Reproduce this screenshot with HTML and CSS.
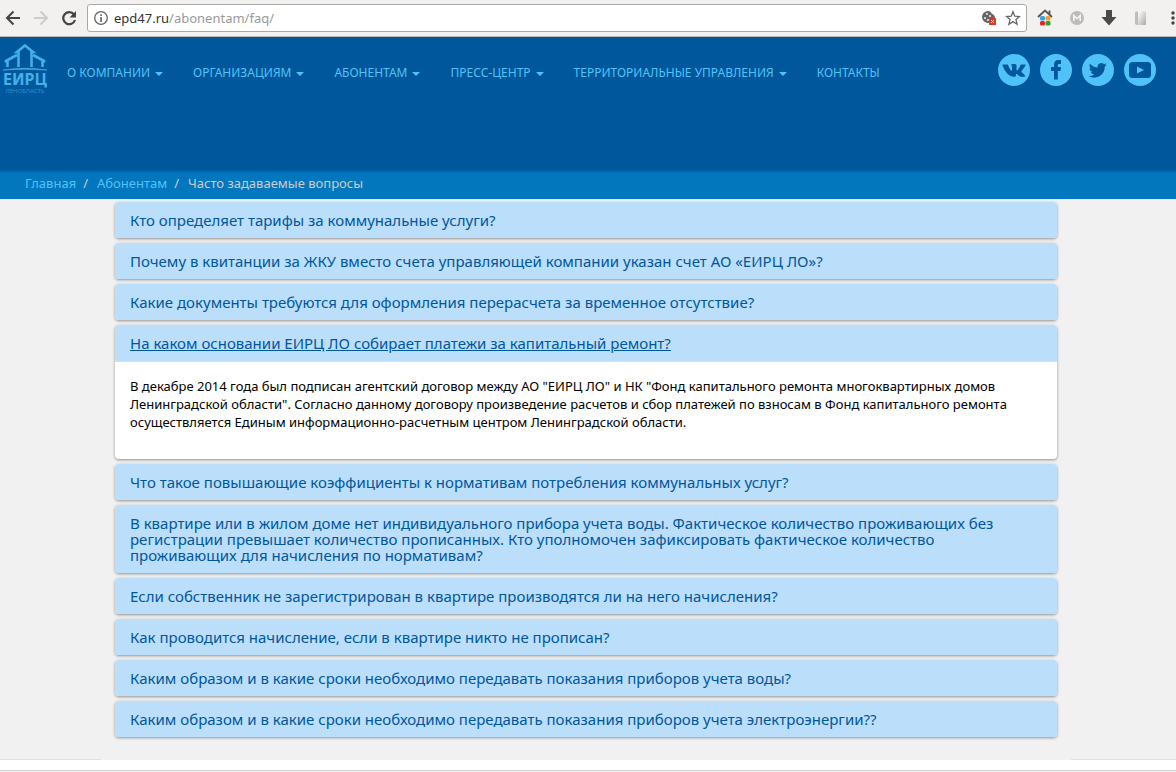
FILE: index.html
```html
<!DOCTYPE html>
<html lang="ru">
<head>
<meta charset="utf-8">
<title>Часто задаваемые вопросы</title>
<link rel="stylesheet" href="styles.css">
</head>
<body>
<div class="toolbar">
  <button class="tool" aria-label="Назад"><svg width="16" height="16" viewBox="0 0 16 16" fill="none" stroke="#444" stroke-width="2"><path d="M15 8H2M8.500 1.500L2 8l6.500 6.500"/></svg></button>
  <button class="tool" aria-label="Вперёд" disabled><svg width="16" height="16" viewBox="0 0 16 16" fill="none" stroke="#ccc" stroke-width="2"><path d="M1 8h13M7.500 1.500L14 8l-6.500 6.500"/></svg></button>
  <button class="tool" aria-label="Обновить"><svg width="16" height="16" viewBox="0 0 16 16"><path d="M13 4.500A6 6 0 1 0 14 10" fill="none" stroke="#444" stroke-width="2.200"/><path d="M15 1v6.500H8.500z" fill="#444"/></svg></button>
  <div class="address">
    <svg width="16" height="16" viewBox="0 0 16 16"><circle cx="8" cy="8" r="6.300" fill="none" stroke="#666" stroke-width="1.300"/><path d="M7.200 4.200h1.700v1.700H7.200zM7.200 7h1.700v5H7.200z" fill="#666"/></svg>
    <a class="url" href="#">epd47.ru<span class="path">/abonentam/faq/</span></a>
    <button class="tool" aria-label="Файлы cookie"><svg width="16" height="16" viewBox="0 0 16 16"><path d="M7 1a6 6 0 1 0 0 12h1V8h6c0-3-2-4-3-4-1-2-2-3-4-3z" fill="#666"/><g fill="#f4f4f4"><circle cx="6" cy="4" r="1"/><circle cx="4" cy="8" r="1"/><circle cx="7" cy="10" r="1"/><circle cx="9" cy="6" r="1"/></g><path d="M8 8h7v7H8z" fill="#d93a2e"/><path d="M10 10l3 3m0-3l-3 3" stroke="#fff"/></svg></button>
    <button class="tool" aria-label="Добавить в закладки"><svg width="16" height="16" viewBox="0 0 16 16"><path d="M8 1.800l1.800 4.400 4.700.3-3.600 3 1.200 4.700L8 11.600l-4.100 2.600 1.200-4.700-3.600-3 4.700-.3z" fill="none" stroke="#666" stroke-width="1.300"/></svg></button>
  </div>
  <div class="extensions">
    <button class="tool" aria-label="Домашняя страница"><svg width="16" height="18" viewBox="0 0 16 18"><path d="M1 8L8 1.500 15 8M12.500 1.500v4" fill="none" stroke="#555" stroke-width="1.800"/><rect x="3" y="7" width="5" height="4.500" rx="1.500" fill="#35a3ee"/><rect x="8.500" y="7" width="5" height="4.500" rx="1.500" fill="#f9a11b"/><rect x="3" y="12" width="5" height="4.500" rx="1.500" fill="#e52420"/><rect x="8.500" y="12" width="5" height="4.500" rx="1.500" fill="#22a339"/></svg></button>
    <button class="tool" aria-label="Расширение M"><svg width="16" height="16" viewBox="0 0 16 16"><circle cx="8" cy="8" r="7" fill="#bbb"/><path d="M4.800 11V5.500L8 8.700l3.200-3.200V11" fill="none" stroke="#f2f2f2" stroke-width="1.600"/></svg></button>
    <button class="tool" aria-label="Загрузки"><svg width="16" height="16" viewBox="0 0 16 16"><path d="M5 0h6v7h4.500L8 15.500.5 7H5z" fill="#4a4a4a"/></svg></button>
    <button class="tool" aria-label="Страница"><svg width="16" height="16" viewBox="0 0 16 16"><defs><linearGradient id="page-fill" x1="0" y1="0" x2="1" y2="1"><stop offset="0" stop-color="#fff"/><stop offset="1" stop-color="#aaa"/></linearGradient></defs><path d="M2 2l4-1v14H4q-2 0-2-2z" fill="#bdbdbd"/><path d="M5 1h6q2 0 2 2v11q0 1-1 1H5z" fill="url(#page-fill)"/></svg></button>
    <button class="tool" aria-label="Меню"><svg width="16" height="16" viewBox="0 0 16 16" fill="#444"><circle cx="8" cy="3" r="1.700"/><circle cx="8" cy="8" r="1.700"/><circle cx="8" cy="13" r="1.700"/></svg></button>
  </div>
</div>

<header class="header">
  <a class="logo" href="#" aria-label="ЕИРЦ Ленобласть">
    <svg width="48" height="54" viewBox="0 0 48 54"><g fill="none" stroke="#42b0e8" stroke-width="2.600"><path d="M15.500 24V9h-1.500L22 2.500 30 9h-1.500v15"/><path d="M14 12L2 18.500h2.500V24"/><path d="M30 12l12 6.500h-2.500V24"/></g><path d="M0 27Q22 23.500 44 27 22 25.500 0 27z" fill="#42b0e8" stroke="#42b0e8" stroke-width=".6"/><text class="logo-name" x="22" y="42" text-anchor="middle">ЕИРЦ</text><text class="logo-region" x="22" y="50" text-anchor="middle">ЛЕНОБЛАСТЬ</text></svg>
  </a>
  <nav class="menu">
    <a class="drop" href="#">О КОМПАНИИ</a>
    <a class="drop" href="#">ОРГАНИЗАЦИЯМ</a>
    <a class="drop" href="#">АБОНЕНТАМ</a>
    <a class="drop" href="#">ПРЕСС-ЦЕНТР</a>
    <a class="drop" href="#">ТЕРРИТОРИАЛЬНЫЕ УПРАВЛЕНИЯ</a>
    <a href="#">КОНТАКТЫ</a>
  </nav>
  <div class="social">
    <a href="#" aria-label="ВКонтакте"><svg width="32" height="32" viewBox="0 0 32 32"><path d="M5 10.500h4.200c.7 0 .8.500 1 1 .8 2 2 4.200 3 5 .6.400.9 0 .9-.7v-3c0-1.200-.6-1.400-1.200-1.700.4-.8 1.400-1 2.600-1 2 0 3 .1 3 1.500v4.200c0 .8.500 1 1.100.4 1.100-1.200 2.100-3 2.700-4.600.3-.7.500-1 1.300-1H27c.6 0 .6.500.3 1.100-.8 1.700-2.400 3.600-3.500 5-.5.600-.5 1 0 1.500 1 .9 2.400 2.300 3.200 3.400.5.600 0 1.200-.7 1.200h-3.500c-1.700 0-2.900-2.800-4.200-2.800-.6 0-.8.400-.8 1.200 0 1-.3 1.600-1.300 1.600-5.600 0-9.300-4.200-11.900-11.200-.2-.6-.2-1.100.4-1.100z" fill="#01579b"/></svg></a>
    <a href="#" aria-label="Facebook"><svg width="32" height="32" viewBox="0 0 32 32"><path d="M14 25.500V17h-3v-4h3v-2.500C14 7.800 15.700 6 18.300 6H21v4h-2c-.8 0-1.200.4-1.200 1.200V13H21l-.5 4h-2.700v8.500z" fill="#01579b"/></svg></a>
    <a href="#" aria-label="Twitter"><svg width="32" height="32" viewBox="0 0 32 32"><path d="M24.800 10.700a7 7 0 0 1-2.100.6 3.700 3.700 0 0 0 1.600-2 7 7 0 0 1-2.300.9 3.700 3.700 0 0 0-6.300 3.400 10.400 10.400 0 0 1-7.600-3.900 3.700 3.700 0 0 0 1.100 4.900 3.600 3.600 0 0 1-1.700-.5c0 1.800 1.200 3.300 3 3.700a3.700 3.700 0 0 1-1.700.1 3.700 3.700 0 0 0 3.400 2.500A7.400 7.400 0 0 1 6.800 22c6.800 4.200 16 0 16-9.400a7.500 7.500 0 0 0 2-1.900z" fill="#01579b"/></svg></a>
    <a href="#" aria-label="YouTube"><svg width="32" height="32" viewBox="0 0 32 32"><rect x="5" y="8" width="22" height="16" rx="3.500" fill="#01579b"/><path d="M13 12.500l7 3.500-7 3.500z" fill="#4fc3f7"/></svg></a>
  </div>
</header>

<nav class="crumbs" aria-label="Навигация">
  <a href="#">Главная</a><span class="sep">/</span><a href="#">Абонентам</a><span class="sep">/</span><span>Часто задаваемые вопросы</span>
</nav>

<main class="faq">
  <section class="panel"><h2><a href="#">Кто определяет тарифы за коммунальные услуги?</a></h2></section>
  <section class="panel"><h2><a href="#">Почему в квитанции за ЖКУ вместо счета управляющей компании указан счет АО «ЕИРЦ ЛО»?</a></h2></section>
  <section class="panel"><h2><a href="#">Какие документы требуются для оформления перерасчета за временное отсутствие?</a></h2></section>
  <section class="panel open"><h2><a href="#">На каком основании ЕИРЦ ЛО собирает платежи за капитальный ремонт?</a></h2>
    <p class="answer">В декабре 2014 года был подписан агентский договор между АО "ЕИРЦ ЛО" и НК "Фонд капитального ремонта многоквартирных домов Ленинградской области". Согласно данному договору произведение расчетов и сбор платежей по взносам в Фонд капитального ремонта осуществляется Единым информационно-расчетным центром Ленинградской области.</p>
  </section>
  <section class="panel"><h2><a href="#">Что такое повышающие коэффициенты к нормативам потребления коммунальных услуг?</a></h2></section>
  <section class="panel"><h2><a href="#">В квартире или в жилом доме нет индивидуального прибора учета воды. Фактическое количество проживающих без регистрации превышает количество прописанных. Кто уполномочен зафиксировать фактическое количество проживающих для начисления по нормативам?</a></h2></section>
  <section class="panel"><h2><a href="#">Если собственник не зарегистрирован в квартире производятся ли на него начисления?</a></h2></section>
  <section class="panel"><h2><a href="#">Как проводится начисление, если в квартире никто не прописан?</a></h2></section>
  <section class="panel"><h2><a href="#">Каким образом и в какие сроки необходимо передавать показания приборов учета воды?</a></h2></section>
  <section class="panel"><h2><a href="#">Каким образом и в какие сроки необходимо передавать показания приборов учета электроэнергии??</a></h2></section>
</main>
<footer class="footer"></footer>
</body>
</html>
```
FILE: styles.css
```css
* { box-sizing: border-box; }
body {
  margin: 0;
  background: #f1f1f1;
  font: 13px/18px "Noto Sans", "Open Sans", sans-serif;
  color: #000;
}
a { color: inherit; text-decoration: none; }
svg { display: block; }

.toolbar {
  display: flex;
  align-items: center;
  gap: 12px;
  height: 37px;
  padding-left: 5px;
  background: #f2f1f0;
  border-bottom: 1px solid #b9b9b7;
  overflow: hidden;
}
.tool { flex: none; padding: 0; border: 0; background: none; }
.address {
  flex: 1;
  display: flex;
  align-items: center;
  gap: 8px;
  height: 28px;
  margin-left: -2px;
  padding: 0 5px;
  background: #fff;
  border: 1px solid #a9a9a7;
  border-radius: 3px;
}
.url { flex: 1; margin-left: -3px; font-size: 13px; color: #333; }
.path { color: #999; }
.extensions { display: flex; align-items: center; gap: 16px; margin: 0 -5px 0 -2px; }

.header {
  display: flex;
  align-items: flex-start;
  height: 133px;
  padding: 6px 20px 0 3px;
  background: #01579b;
}
.logo { flex: none; }
.logo-name { font: bold 16px "Noto Sans", sans-serif; fill: #42b0e8; }
.logo-region { font: 6px "Noto Sans", sans-serif; fill: #2d91cc; }
.menu {
  flex: 1;
  display: flex;
  gap: 30px;
  padding: 21px 0 0 16px;
  font-size: 12px;
  color: #4fc3f7;
  white-space: nowrap;
}
.drop::after {
  content: "";
  display: inline-block;
  margin-left: 5px;
  vertical-align: middle;
  border: 4px solid transparent;
  border-top-color: #4fc3f7;
  border-bottom: 0;
}
.social { display: flex; gap: 10px; padding-top: 11px; }
.social a { border-radius: 50%; background: #4fc3f7; }

.crumbs {
  display: flex;
  padding: 4px 25px 7px;
  background: linear-gradient(#015a9f, #0277bd 3px);
  color: #ccc;
}
.crumbs a { color: #4fc3f7; }
.sep { padding: 0 9px 0 7px; }

.faq {
  display: grid;
  gap: 5px;
  padding: 3px 119px 22px 115px;
}
.panel {
  border-radius: 4px;
  background: #fff;
  box-shadow: 0 1px 3px rgba(0, 0, 0, .4);
  overflow: hidden;
}
.panel h2 {
  margin: 0;
  padding: 10px 15px;
  background: #bbdefb;
  color: #01579b;
  font-size: 15px;
  font-weight: normal;
  line-height: 16px;
}
.open a { text-decoration: underline; }
.answer { margin: 0; padding: 15px 15px 28px; border-top: 1px solid #ddd; }
.footer {
  height: 12px;
  background: linear-gradient(90deg, #e0e0e0 101px, #f1f1f1 101px calc(100% - 105px), #e0e0e0 calc(100% - 105px)) top / 100% 1px no-repeat #fff;
  border-bottom: 1px solid #d0d0d0;
}
```
